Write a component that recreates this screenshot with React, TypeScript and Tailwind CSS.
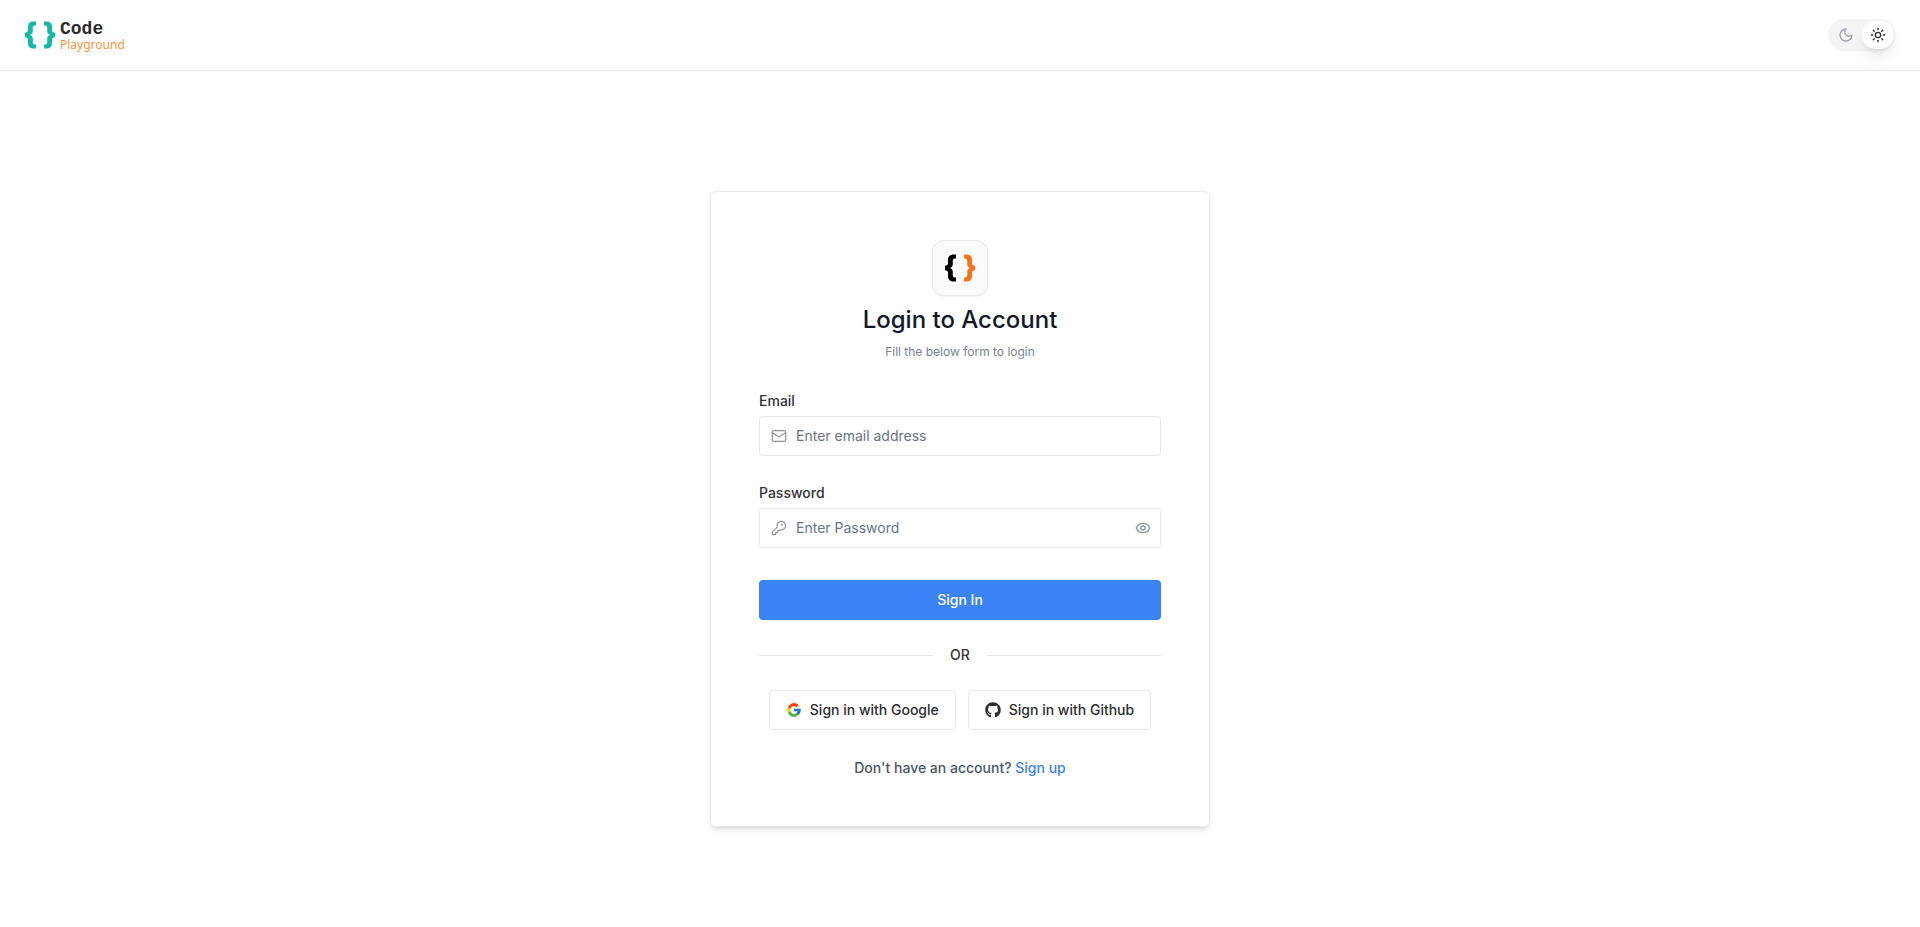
import React, { useState } from "react";
import { Eye, EyeOff, KeyRound, Mail, Sun } from "lucide-react";
import { FcGoogle } from "react-icons/fc";
import { FaGithub } from "react-icons/fa";

const BRACE =
  "M12 .5H9.500C6 .5 4 2.500 4 6V9C4 10.800 3 11.800 1 11.800V16.200C3 16.200 4 17.200 4 19V22C4 25.500 6 27.500 9.500 27.500H12V23.500H10.800C9.400 23.500 8.800 22.800 8.800 21.300V18.200C8.800 16 8 14.600 6 14C8 13.400 8.800 12 8.800 9.800V6.700C8.800 5.200 9.400 4.500 10.800 4.500H12Z";

function Braces({ left, right }: { left: string; right: string }) {
  return (
    <svg width="32" height="28" viewBox="0 0 32 28" aria-hidden="true">
      <path className={left} d={BRACE} />
      <path className={right} d={BRACE} transform="translate(32 0) scale(-1 1)" />
    </svg>
  );
}

function MoonIcon() {
  return (
    <svg width="16" height="16" viewBox="0 0 24 24" fill="none" stroke="currentColor" strokeWidth="2" strokeLinecap="round" strokeLinejoin="round" aria-hidden="true">
      <path d="M12 3a6 6 0 0 0 9 9 9 9 0 1 1-9-9Z" />
    </svg>
  );
}

function Header() {
  return (
    <header className="flex h-[71px] items-center justify-between border-b border-[#e5e7eb] px-6">
      <a href="#" className="flex items-center gap-1">
        <Braces left="fill-[#14b8a6]" right="fill-[#14b8a6]" />
        <span className="flex flex-col pt-0.5">
          <span className="font-['Liberation_Mono',monospace] text-lg leading-[18px] font-bold text-[#2d2d2d]">Code</span>
          <span className="font-['Noto_Sans',sans-serif] text-xs leading-[14px] text-[#fb923c]">Playground</span>
        </span>
      </a>
      <div className="flex items-center rounded-full bg-[#f3f4f6] p-0.5">
        <button type="button" aria-label="Dark mode" className="flex h-7 w-8 items-center justify-center rounded-full text-[#9ca3af]">
          <MoonIcon />
        </button>
        <button type="button" aria-label="Light mode" className="flex h-7 w-8 items-center justify-center rounded-full bg-white text-[#2d2d2d] shadow-lg">
          <Sun size={16} strokeWidth={2} />
        </button>
      </div>
    </header>
  );
}

const field =
  "h-10 w-full rounded border border-[#e5e7eb] bg-white pr-9 pb-0.5 pl-9 text-sm text-[#333] placeholder:text-[#6b7280] outline-none focus:border-[#3b82f6]";
const fieldIcon = "absolute top-3 left-3 text-[#8b919e]";
const social =
  "flex h-10 items-center gap-2 rounded border border-[#e5e7eb] px-4 text-sm font-medium text-[#2d2d2d]";

export default function App() {
  const [visible, setVisible] = useState(false);
  return (
    <div className="flex min-h-screen flex-col bg-white font-['Inter',sans-serif] text-[#333]">
      <Header />
      <main className="flex flex-1 items-center justify-center pt-5">
        <section className="w-full max-w-[500px] rounded-md border border-[#e5e7eb] p-12 shadow-md">
          <div className="flex flex-col items-center">
            <div className="flex size-14 items-center justify-center rounded-xl border border-[#e5e7eb] bg-[#f9fafb] shadow-xs">
              <Braces left="fill-black" right="fill-[#f97316]" />
            </div>
            <h1 className="mt-2 text-2xl leading-8 font-medium text-[#111827]">Login to Account</h1>
            <p className="mt-2 text-xs leading-4 text-[#7c8290]">Fill the below form to login</p>
          </div>
          <form className="mt-[31px] flex flex-col" onSubmit={(e) => e.preventDefault()}>
            <label htmlFor="email" className="text-sm font-medium">Email</label>
            <div className="relative mt-[5px]">
              <Mail size={16} strokeWidth={1.75} className={fieldIcon} />
              <input id="email" type="email" placeholder="Enter email address" className={field} />
            </div>
            <label htmlFor="password" className="mt-[27px] text-sm font-medium">Password</label>
            <div className="relative mt-[5px]">
              <KeyRound size={16} strokeWidth={1.75} className={fieldIcon} />
              <input id="password" type={visible ? "text" : "password"} placeholder="Enter Password" className={field} />
              <button
                type="button"
                aria-label="Show password"
                onClick={() => setVisible(!visible)}
                className="absolute top-3 right-2.5 text-[#8b919e]"
              >
                {visible ? <EyeOff size={16} strokeWidth={2} /> : <Eye size={16} strokeWidth={2} />}
              </button>
            </div>
            <button type="submit" className="mt-8 h-10 rounded bg-[#3b82f6] text-sm font-medium text-white">Sign In</button>
          </form>
          <div className="my-[25px] flex items-center gap-4 text-sm font-medium">
            <span className="h-px flex-1 bg-[#e5e7eb]" />
            OR
            <span className="h-px flex-1 bg-[#e5e7eb]" />
          </div>
          <div className="flex justify-center gap-3">
            <button type="button" className={social}>
              <FcGoogle size={16} />
              Sign in with Google
            </button>
            <button type="button" className={social}>
              <FaGithub size={16} />
              Sign in with Github
            </button>
          </div>
          <p className="mt-7 text-center text-sm font-medium text-[#4b5563]">
            Don't have an account? <a href="#" className="text-[#3b82f6]">Sign up</a>
          </p>
        </section>
      </main>
    </div>
  );
}
